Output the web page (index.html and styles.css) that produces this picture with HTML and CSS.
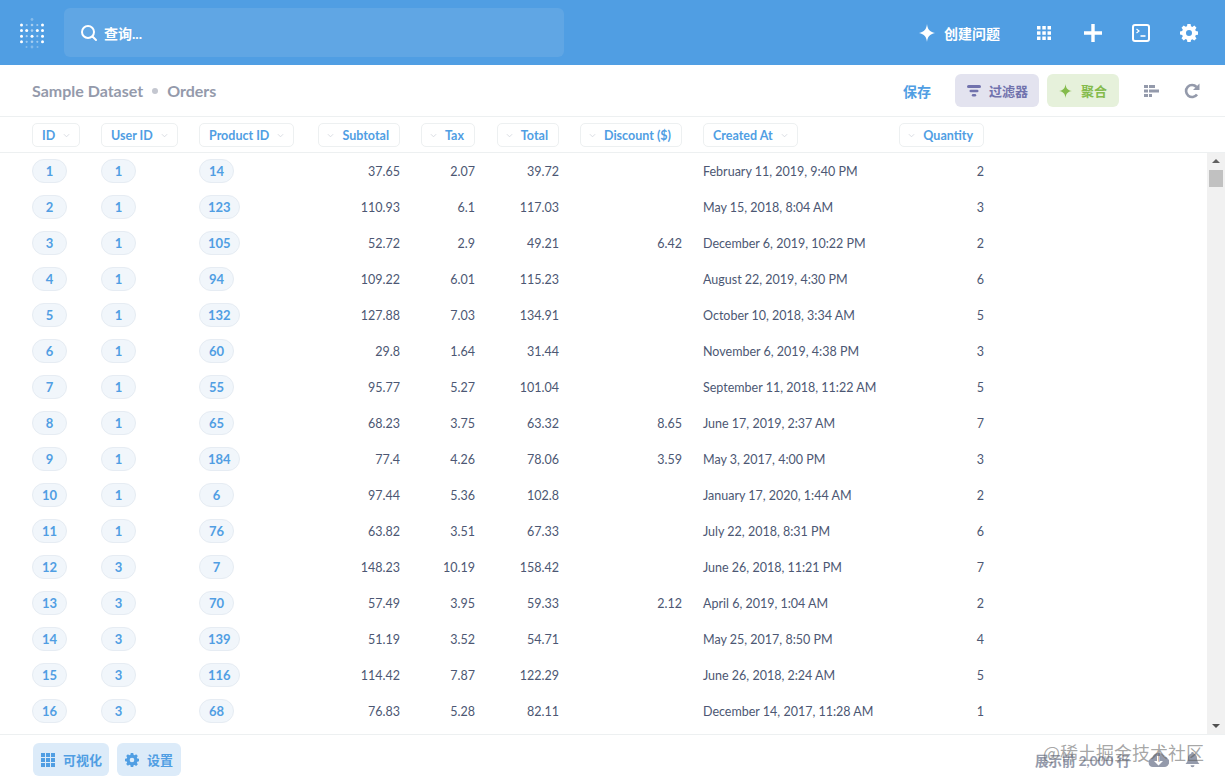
FILE: index.html
```html
<!DOCTYPE html>
<html lang="zh">
<head>
<meta charset="utf-8">
<title>Orders</title>
<link rel="stylesheet" href="styles.css">
</head>
<body>
<div class="app">
  <header class="topbar">
    <svg class="logo" width="26" height="32" viewBox="0 0 26 32" fill="#fff">
      <g opacity=".3"><circle cx="13" cy="2.500" r="1.400"/><circle cx="13" cy="30" r="1.400"/><circle cx="7.500" cy="30" r="1"/><circle cx="18.500" cy="30" r="1"/></g>
      <circle cx="2.500" cy="8" r="1.500"/><circle cx="7.700" cy="8" r="1.100" opacity=".45"/><circle cx="13" cy="8" r="1.300" opacity=".5"/><circle cx="18.300" cy="8" r="1.100" opacity=".45"/><circle cx="23.500" cy="8" r="1.500"/>
      <circle cx="2.500" cy="13.600" r="1.500"/><circle cx="7.700" cy="13.600" r="1.500"/><circle cx="13" cy="13.600" r="1.300" opacity=".5"/><circle cx="18.300" cy="13.600" r="1.500"/><circle cx="23.500" cy="13.600" r="1.500"/>
      <circle cx="2.500" cy="19.200" r="1.500"/><circle cx="7.700" cy="19.200" r="1.100" opacity=".5"/><circle cx="13" cy="19.200" r="1.500"/><circle cx="18.300" cy="19.200" r="1.100" opacity=".5"/><circle cx="23.500" cy="19.200" r="1.500"/>
      <circle cx="2.500" cy="24.800" r="1.500"/><circle cx="7.700" cy="24.800" r="1.100" opacity=".45"/><circle cx="13" cy="24.800" r="1.300" opacity=".5"/><circle cx="18.300" cy="24.800" r="1.100" opacity=".45"/><circle cx="23.500" cy="24.800" r="1.500"/>
    </svg>
    <div class="search">
      <svg width="18" height="18" viewBox="0 0 18 18" fill="none" stroke="#fff" stroke-width="2" stroke-linecap="round"><circle cx="8" cy="8" r="6"/><path d="M12.500 12.500 16 16"/></svg>
      <span>查询...</span>
    </div>
    <div class="top-actions">
      <span class="ask">
        <svg width="16" height="18" viewBox="0 0 16 18" fill="#fff"><path d="M8 0C8.700 5.500 10.500 7.800 16 9 10.500 10.200 8.700 12.500 8 18 7.300 12.500 5.500 10.200 0 9 5.500 7.800 7.300 5.500 8 0Z"/></svg>
        创建问题
      </span>
      <svg class="grid-ico" width="16" height="16" viewBox="0 0 16 16" fill="#fff"><rect x="1" y="1" width="3.500" height="3.500"/><rect x="6.300" y="1" width="3.500" height="3.500"/><rect x="11.500" y="1" width="3.500" height="3.500"/><rect x="1" y="6.300" width="3.500" height="3.500"/><rect x="6.300" y="6.300" width="3.500" height="3.500"/><rect x="11.500" y="6.300" width="3.500" height="3.500"/><rect x="1" y="11.500" width="3.500" height="3.500"/><rect x="6.300" y="11.500" width="3.500" height="3.500"/><rect x="11.500" y="11.500" width="3.500" height="3.500"/></svg>
      <svg class="plus-ico" width="18" height="18" viewBox="0 0 18 18" fill="#fff"><path d="M7.300 0h3.400v7.300H18v3.400h-7.300V18H7.300v-7.300H0V7.300h7.300z"/></svg>
      <svg class="sql-ico" width="18" height="18" viewBox="0 0 18 18" fill="none" stroke="#fff"><rect x="1" y="1" width="16" height="16" rx="2" stroke-width="2"/><path d="M4.500 5l2.500 2-2.500 2" stroke-width="1.200"/><path d="M8.500 12h5" stroke-width="1.600"/></svg>
      <svg class="gear-ico" width="18" height="18" viewBox="0 0 18 18"><path fill="#fff" fill-rule="evenodd" d="M7.400 0h3.200l.4 2.300 1.400.6 1.900-1.300 2.200 2.200-1.300 1.900.6 1.400 2.200.4v3.200l-2.200.4-.6 1.400 1.300 1.900-2.200 2.200-1.900-1.300-1.400.6-.4 2.300H7.400L7 15.700l-1.400-.6-1.900 1.300-2.200-2.200 1.300-1.900-.6-1.400L0 10.500V7.400l2.200-.4.6-1.400-1.300-1.900 2.200-2.200 1.900 1.300L7 2.300zM9 6a3 3 0 1 0 0 6 3 3 0 0 0 0-6z"/></svg>
    </div>
  </header>

  <div class="subbar">
    <div class="crumbs"><span>Sample Dataset</span><i class="dot"></i><span>Orders</span></div>
    <div class="sub-actions">
      <span class="save">保存</span>
      <span class="pill-btn filter">
        <svg width="14" height="12" viewBox="0 0 14 12" fill="#7172ad"><rect width="14" height="3" rx="1.500"/><rect x="2.500" y="4.700" width="9" height="2.600" rx="1.300"/><rect x="4.800" y="9" width="4.400" height="2.600" rx="1.300"/></svg>
        过滤器
      </span>
      <span class="pill-btn summarize">
        <svg width="13" height="14" viewBox="0 0 13 14" fill="#84bb4c"><path d="M6.500 0C7 4.300 8.500 6.200 13 7 8.500 7.800 7 9.700 6.500 14 6 9.700 4.500 7.800 0 7 4.500 6.200 6 4.300 6.500 0Z"/></svg>
        聚合
      </span>
      <svg class="fields-ico" width="15" height="12" viewBox="0 0 15 12" fill="#949aab"><rect width="4" height="3" y="0"/><rect x="5" width="6" height="3" y="0"/><rect width="4" height="3" y="4.500"/><rect x="5" width="10" height="3" y="4.500"/><rect width="4" height="3" y="9"/><rect x="5" width="3" height="3" y="9"/></svg>
      <svg class="refresh-ico" width="16" height="16" viewBox="0 0 16 16" fill="none"><path d="M13 11.500A6 6 0 1 1 12.500 4" stroke="#949aab" stroke-width="2.600"/><path d="M15.500 .5v6.500H9z" fill="#949aab"/></svg>
    </div>
  </div>

  <div class="table-head cols">
    <div class="hcell"><span class="hd">ID<svg class="chev" viewBox="0 0 8 5"><path d="M1 1l3 3 3-3"/></svg></span></div>
    <div class="hcell"><span class="hd">User ID<svg class="chev" viewBox="0 0 8 5"><path d="M1 1l3 3 3-3"/></svg></span></div>
    <div class="hcell"><span class="hd">Product ID<svg class="chev" viewBox="0 0 8 5"><path d="M1 1l3 3 3-3"/></svg></span></div>
    <div class="hcell right"><span class="hd rev">Subtotal<svg class="chev" viewBox="0 0 8 5"><path d="M1 1l3 3 3-3"/></svg></span></div>
    <div class="hcell right"><span class="hd rev">Tax<svg class="chev" viewBox="0 0 8 5"><path d="M1 1l3 3 3-3"/></svg></span></div>
    <div class="hcell right"><span class="hd rev">Total<svg class="chev" viewBox="0 0 8 5"><path d="M1 1l3 3 3-3"/></svg></span></div>
    <div class="hcell right"><span class="hd rev">Discount ($)<svg class="chev" viewBox="0 0 8 5"><path d="M1 1l3 3 3-3"/></svg></span></div>
    <div class="hcell created"><span class="hd">Created At<svg class="chev" viewBox="0 0 8 5"><path d="M1 1l3 3 3-3"/></svg></span></div>
    <div class="hcell right"><span class="hd rev">Quantity<svg class="chev" viewBox="0 0 8 5"><path d="M1 1l3 3 3-3"/></svg></span></div>
  </div>

  <div class="table-wrap">
    <div class="rows">
      <div class="row cols"><div class="cell"><span class="tag">1</span></div><div class="cell"><span class="tag">1</span></div><div class="cell"><span class="tag">14</span></div><div class="cell right">37.65</div><div class="cell right">2.07</div><div class="cell right">39.72</div><div class="cell right"></div><div class="cell created">February 11, 2019, 9:40 PM</div><div class="cell right">2</div></div>
      <div class="row cols"><div class="cell"><span class="tag">2</span></div><div class="cell"><span class="tag">1</span></div><div class="cell"><span class="tag">123</span></div><div class="cell right">110.93</div><div class="cell right">6.1</div><div class="cell right">117.03</div><div class="cell right"></div><div class="cell created">May 15, 2018, 8:04 AM</div><div class="cell right">3</div></div>
      <div class="row cols"><div class="cell"><span class="tag">3</span></div><div class="cell"><span class="tag">1</span></div><div class="cell"><span class="tag">105</span></div><div class="cell right">52.72</div><div class="cell right">2.9</div><div class="cell right">49.21</div><div class="cell right">6.42</div><div class="cell created">December 6, 2019, 10:22 PM</div><div class="cell right">2</div></div>
      <div class="row cols"><div class="cell"><span class="tag">4</span></div><div class="cell"><span class="tag">1</span></div><div class="cell"><span class="tag">94</span></div><div class="cell right">109.22</div><div class="cell right">6.01</div><div class="cell right">115.23</div><div class="cell right"></div><div class="cell created">August 22, 2019, 4:30 PM</div><div class="cell right">6</div></div>
      <div class="row cols"><div class="cell"><span class="tag">5</span></div><div class="cell"><span class="tag">1</span></div><div class="cell"><span class="tag">132</span></div><div class="cell right">127.88</div><div class="cell right">7.03</div><div class="cell right">134.91</div><div class="cell right"></div><div class="cell created">October 10, 2018, 3:34 AM</div><div class="cell right">5</div></div>
      <div class="row cols"><div class="cell"><span class="tag">6</span></div><div class="cell"><span class="tag">1</span></div><div class="cell"><span class="tag">60</span></div><div class="cell right">29.8</div><div class="cell right">1.64</div><div class="cell right">31.44</div><div class="cell right"></div><div class="cell created">November 6, 2019, 4:38 PM</div><div class="cell right">3</div></div>
      <div class="row cols"><div class="cell"><span class="tag">7</span></div><div class="cell"><span class="tag">1</span></div><div class="cell"><span class="tag">55</span></div><div class="cell right">95.77</div><div class="cell right">5.27</div><div class="cell right">101.04</div><div class="cell right"></div><div class="cell created">September 11, 2018, 11:22 AM</div><div class="cell right">5</div></div>
      <div class="row cols"><div class="cell"><span class="tag">8</span></div><div class="cell"><span class="tag">1</span></div><div class="cell"><span class="tag">65</span></div><div class="cell right">68.23</div><div class="cell right">3.75</div><div class="cell right">63.32</div><div class="cell right">8.65</div><div class="cell created">June 17, 2019, 2:37 AM</div><div class="cell right">7</div></div>
      <div class="row cols"><div class="cell"><span class="tag">9</span></div><div class="cell"><span class="tag">1</span></div><div class="cell"><span class="tag">184</span></div><div class="cell right">77.4</div><div class="cell right">4.26</div><div class="cell right">78.06</div><div class="cell right">3.59</div><div class="cell created">May 3, 2017, 4:00 PM</div><div class="cell right">3</div></div>
      <div class="row cols"><div class="cell"><span class="tag">10</span></div><div class="cell"><span class="tag">1</span></div><div class="cell"><span class="tag">6</span></div><div class="cell right">97.44</div><div class="cell right">5.36</div><div class="cell right">102.8</div><div class="cell right"></div><div class="cell created">January 17, 2020, 1:44 AM</div><div class="cell right">2</div></div>
      <div class="row cols"><div class="cell"><span class="tag">11</span></div><div class="cell"><span class="tag">1</span></div><div class="cell"><span class="tag">76</span></div><div class="cell right">63.82</div><div class="cell right">3.51</div><div class="cell right">67.33</div><div class="cell right"></div><div class="cell created">July 22, 2018, 8:31 PM</div><div class="cell right">6</div></div>
      <div class="row cols"><div class="cell"><span class="tag">12</span></div><div class="cell"><span class="tag">3</span></div><div class="cell"><span class="tag">7</span></div><div class="cell right">148.23</div><div class="cell right">10.19</div><div class="cell right">158.42</div><div class="cell right"></div><div class="cell created">June 26, 2018, 11:21 PM</div><div class="cell right">7</div></div>
      <div class="row cols"><div class="cell"><span class="tag">13</span></div><div class="cell"><span class="tag">3</span></div><div class="cell"><span class="tag">70</span></div><div class="cell right">57.49</div><div class="cell right">3.95</div><div class="cell right">59.33</div><div class="cell right">2.12</div><div class="cell created">April 6, 2019, 1:04 AM</div><div class="cell right">2</div></div>
      <div class="row cols"><div class="cell"><span class="tag">14</span></div><div class="cell"><span class="tag">3</span></div><div class="cell"><span class="tag">139</span></div><div class="cell right">51.19</div><div class="cell right">3.52</div><div class="cell right">54.71</div><div class="cell right"></div><div class="cell created">May 25, 2017, 8:50 PM</div><div class="cell right">4</div></div>
      <div class="row cols"><div class="cell"><span class="tag">15</span></div><div class="cell"><span class="tag">3</span></div><div class="cell"><span class="tag">116</span></div><div class="cell right">114.42</div><div class="cell right">7.87</div><div class="cell right">122.29</div><div class="cell right"></div><div class="cell created">June 26, 2018, 2:24 AM</div><div class="cell right">5</div></div>
      <div class="row cols"><div class="cell"><span class="tag">16</span></div><div class="cell"><span class="tag">3</span></div><div class="cell"><span class="tag">68</span></div><div class="cell right">76.83</div><div class="cell right">5.28</div><div class="cell right">82.11</div><div class="cell right"></div><div class="cell created">December 14, 2017, 11:28 AM</div><div class="cell right">1</div></div>
    </div>
    <div class="scrollbar">
      <i class="arrow up"></i>
      <div class="track"><div class="thumb"></div></div>
      <i class="arrow down"></i>
    </div>
  </div>

  <footer class="footbar">
    <div class="foot-left">
      <span class="foot-btn">
        <svg width="14" height="14" viewBox="0 0 14 14" fill="#509ee3"><rect width="4" height="4"/><rect x="5" width="4" height="4"/><rect x="10" width="4" height="4"/><rect y="5" width="4" height="4"/><rect x="5" y="5" width="4" height="4"/><rect x="10" y="5" width="4" height="4"/><rect y="10" width="4" height="4"/><rect x="5" y="10" width="4" height="4"/><rect x="10" y="10" width="4" height="4"/></svg>
        可视化
      </span>
      <span class="foot-btn wide">
        <svg width="14" height="14" viewBox="0 0 18 18"><path fill="#509ee3" fill-rule="evenodd" d="M7.400 0h3.200l.4 2.300 1.400.6 1.900-1.300 2.200 2.200-1.300 1.900.6 1.400 2.200.4v3.200l-2.200.4-.6 1.400 1.300 1.900-2.200 2.200-1.900-1.300-1.400.6-.4 2.300H7.400L7 15.700l-1.400-.6-1.900 1.300-2.200-2.200 1.300-1.900-.6-1.400L0 10.500V7.400l2.200-.4.6-1.400-1.300-1.900 2.200-2.200 1.900 1.300L7 2.300zM9 6a3 3 0 1 0 0 6 3 3 0 0 0 0-6z"/></svg>
        设置
      </span>
    </div>
    <div class="foot-right">
      <span class="count">展示前 2,000 行</span>
      <svg class="cloud" width="21" height="16" viewBox="0 0 21 16"><path fill="#949aab" fill-rule="evenodd" d="M5 15a4.500 4.500 0 0 1-.8-8.900A6.500 6.500 0 0 1 16.500 5 5 5 0 0 1 16 15zM9 4v5H6l4.500 4.500L15 9h-3V4z"/></svg>
      <svg class="bell" width="15" height="16" viewBox="0 0 15 16" fill="#949aab"><path d="M7.500 0a1.300 1.300 0 0 1 1.300 1.400C11 2 12 3.800 12 6c0 3 1 4.500 2.500 6H.5C2 10.500 3 9 3 6c0-2.200 1-4 3.200-4.600A1.300 1.300 0 0 1 7.500 0zM5.500 13.200h4a2 2 0 0 1-4 0z"/></svg>
    </div>
  </footer>
  <div class="watermark">@稀土掘金技术社区</div>
</div>
</body>
</html>
```
FILE: styles.css
```css
* { box-sizing: border-box; }
html, body { margin: 0; height: 100%; }
body { font-family: Lato, "Noto Sans CJK SC", sans-serif; color: #4c5773; background: #fff; overflow: hidden; }
.app { position: relative; display: flex; flex-direction: column; height: 784px; }

.topbar { flex: 0 0 65px; background: #509ee3; display: flex; align-items: center; padding: 0 27px 0 19px; color: #fff; }
.logo { flex: none; }
.search { margin-left: 19px; width: 500px; height: 49px; border-radius: 6px; background: #60a6e4; display: flex; align-items: center; gap: 6px; padding-left: 16px; font-size: 14px; font-weight: 700; }
.top-actions { margin-left: auto; display: flex; align-items: center; }
.ask { display: flex; align-items: center; gap: 9px; font-size: 14px; font-weight: 700; margin-right: 36px; }
.plus-ico { margin-left: 32px; }
.sql-ico { margin-left: 30px; }
.gear-ico { margin-left: 30px; }

.subbar { flex: 0 0 52px; border-bottom: 1px solid #edf0f1; display: flex; align-items: center; justify-content: space-between; padding: 0 25px 0 32px; }
.crumbs { display: flex; align-items: center; font-size: 16px; font-weight: 700; color: #949aab; }
.dot { width: 6px; height: 6px; border-radius: 50%; background: #c4c7d0; margin: 0 9px 0 9px; }
.sub-actions { display: flex; align-items: center; }
.save { color: #509ee3; font-size: 14px; font-weight: 700; margin-right: 24px; }
.pill-btn { height: 33px; border-radius: 6px; display: flex; align-items: center; gap: 8px; padding: 0 11px 0 12px; font-size: 13px; font-weight: 700; }
.filter { background: #e3e3ef; color: #7172ad; width: 84px; margin-right: 8px; }
.summarize { background: #e6f1db; color: #84bb4c; width: 72px; gap: 9px; }
.fields-ico { margin-left: 25px; }
.refresh-ico { margin-left: 25px; }

.cols { display: grid; grid-template-columns: 69px 98px 119px 82px 75px 84px 123px 217px 85px; padding-left: 32px; }
.table-head { flex: 0 0 36px; border-bottom: 1px solid #edf0f1; padding-top: 6px; }
.hcell { display: flex; }
.right { justify-content: flex-end; text-align: right; }
.hd { height: 24px; border: 1px solid #edf0f1; border-radius: 5px; background: #fff; display: flex; align-items: center; gap: 8px; padding: 0 9px; font-size: 12.5px; font-weight: 700; color: #509ee3; white-space: nowrap; }
.rev { flex-direction: row-reverse; padding: 0 10px 0 8px; gap: 8px; }
.chev { width: 7px; height: 5px; fill: none; stroke: #d5d8df; stroke-width: 1; }
.created { padding-left: 21px; }

.table-wrap { flex: 1; min-height: 0; display: flex; justify-content: space-between; border-bottom: 1px solid #edf0f1; }
.rows { flex: 1; overflow: hidden; }
.row { height: 36px; align-items: center; font-size: 12.5px; color: #4c5773; }
.cell { display: flex; align-items: center; white-space: nowrap; }
.tag { min-width: 35px; height: 24px; padding: 0 8px; border-radius: 12px; border: 1px solid #e6ecf3; background: #f1f6fb; color: #509ee3; font-weight: 700; font-size: 13px; display: flex; align-items: center; justify-content: center; }

.scrollbar { flex: 0 0 18px; background: #f1f1f1; display: flex; flex-direction: column; align-items: center; }
.arrow { display: block; width: 0; height: 0; flex: none; border: 4px solid transparent; }
.arrow.up { margin-top: 6px; border-top: 0; border-bottom: 4px solid #606060; margin-bottom: 7px; }
.arrow.down { margin-bottom: 6px; border-bottom: 0; border-top: 4px solid #505050; margin-top: 7px; }
.track { flex: 1; width: 100%; display: flex; justify-content: center; }
.thumb { width: 14px; height: 17px; background: #c1c1c1; }

.footbar { flex: 0 0 49px; display: flex; align-items: flex-start; justify-content: space-between; padding: 8px 25px 0 33px; }
.foot-left { display: flex; gap: 8px; }
.foot-btn { height: 33px; border-radius: 6px; background: #dcebf9; color: #509ee3; display: flex; align-items: center; gap: 8px; padding: 0 7px 0 8px; font-size: 13px; font-weight: 700; }
.wide { padding-right: 8px; }
.foot-right { display: flex; align-items: center; height: 33px; }
.count { font-size: 13.5px; font-weight: 700; color: #949aab; margin-right: 18px; }
.bell { margin-left: 16px; }
.watermark { position: absolute; left: 1043px; top: 741px; font-size: 18px; line-height: 22px; color: rgba(90, 90, 90, .55); white-space: nowrap; font-family: "Noto Sans CJK SC", sans-serif; }
```
